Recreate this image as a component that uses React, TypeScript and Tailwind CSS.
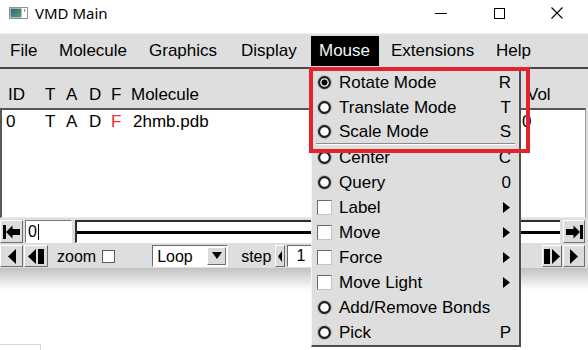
import React from 'react';

const sans = "font-['Liberation_Sans',Arial,sans-serif]";

type MenuItem = {
  label: string;
  kind: 'radio' | 'check';
  on?: boolean;
  accel?: string;
  sub?: boolean;
  sep?: boolean;
};

const topMenus = [
  { label: 'File', cls: 'w-[49px]' },
  { label: 'Molecule', cls: 'w-[90px]' },
  { label: 'Graphics', cls: 'w-[92px]' },
  { label: 'Display', cls: 'w-[78px]' },
  { label: 'Mouse', cls: 'w-[68px] mr-[4px] bg-black text-[#f4f4f4]' },
  { label: 'Extensions', cls: 'w-[105px]' },
  { label: 'Help', cls: 'w-[60px]' },
];

const mouseItems: MenuItem[] = [
  { label: 'Rotate Mode', kind: 'radio', on: true, accel: 'R' },
  { label: 'Translate Mode', kind: 'radio', accel: 'T' },
  { label: 'Scale Mode', kind: 'radio', accel: 'S', sep: true },
  { label: 'Center', kind: 'radio', accel: 'C' },
  { label: 'Query', kind: 'radio', accel: '0' },
  { label: 'Label', kind: 'check', sub: true },
  { label: 'Move', kind: 'check', sub: true },
  { label: 'Force', kind: 'check', sub: true },
  { label: 'Move Light', kind: 'check', sub: true },
  { label: 'Add/Remove Bonds', kind: 'radio' },
  { label: 'Pick', kind: 'radio', accel: 'P' },
];

function Radio({ on }: { on?: boolean }) {
  return (
    <svg width="15" height="15" viewBox="0 0 15 15">
      <circle cx="7.5" cy="7.5" r="7.3" fill="#b0b0b0" />
      <circle cx="7.5" cy="7.5" r="6.4" fill="#1e1e1e" />
      <circle cx="7.5" cy="7.5" r="4.3" fill="#ffffff" />
      {on && <circle cx="7.5" cy="7.5" r="3" fill="#000000" />}
    </svg>
  );
}

function Check() {
  return <div className="h-[15px] w-[15px] border border-t-[#6a6a6a] border-l-[#6a6a6a] border-r-[#c4c4c4] border-b-[#c4c4c4] bg-white" />;
}

function Raised({ className, children }: { className?: string; children?: React.ReactNode }) {
  return (
    <div className={`flex items-center justify-center border border-t-white border-l-white border-r-[#6d6d6d] border-b-[#6d6d6d] bg-[#dcdcdc] ${className ?? ''}`}>
      {children}
    </div>
  );
}

function Tri({ dir, w = 8, h = 15 }: { dir: 'l' | 'r'; w?: number; h?: number }) {
  const pts = dir === 'l' ? `${w},0 0,${h / 2} ${w},${h}` : `0,0 ${w},${h / 2} 0,${h}`;
  return (
    <svg width={w} height={h} viewBox={`0 0 ${w} ${h}`}>
      <polygon points={pts} fill="#000" />
    </svg>
  );
}

function Bar({ w = 6, h = 15 }: { w?: number; h?: number }) {
  return <div className="bg-black" style={{ width: w, height: h }} />;
}

function SkipIcon({ flip }: { flip?: boolean }) {
  return (
    <svg width="17" height="14" viewBox="0 0 17 14" className={flip ? 'scale-x-[-1]' : ''}>
      <rect x="0" y="0" width="3" height="14" fill="#000" />
      <polygon points="3,7 9.5,0.5 9.5,13.5" fill="#000" />
      <rect x="9" y="4" width="8" height="6" fill="#000" />
    </svg>
  );
}

function TitleBar() {
  return (
    <div className="flex h-[33px] items-start bg-white">
      <div className="flex h-[26px] w-full items-center">
        <svg width="19" height="12" viewBox="0 0 19 12" className="ml-[9px]">
          <defs>
            <linearGradient id="vmdg" x1="0" y1="0" x2="1" y2="1">
              <stop offset="0" stopColor="#2d5f86" />
              <stop offset="1" stopColor="#5ca56c" />
            </linearGradient>
          </defs>
          <rect x="0.5" y="0.5" width="18" height="11" fill="#fff" stroke="#8f8f8f" />
          <rect x="1.5" y="1.5" width="11" height="9" fill="url(#vmdg)" />
          <rect x="15" y="2" width="1" height="3" fill="#8f8f8f" />
        </svg>
        <span className="ml-[7px] font-['Noto_Sans','Open_Sans',sans-serif] text-[15px] text-black">VMD Main</span>
        <div className="ml-auto mr-[2px] flex items-center">
          <div className="flex h-[26px] w-[58px] items-center justify-center">
            <div className="h-px w-[12px] bg-black" />
          </div>
          <div className="flex h-[26px] w-[58px] items-center justify-center">
            <div className="h-[11px] w-[11px] border border-black" />
          </div>
          <div className="flex h-[26px] w-[58px] items-center justify-center">
            <svg width="12" height="12" viewBox="0 0 12 12">
              <path d="M0.5 0.5 L11.5 11.5 M11.5 0.5 L0.5 11.5" stroke="#000" strokeWidth="1.1" />
            </svg>
          </div>
        </div>
      </div>
    </div>
  );
}

function MenuBar() {
  return (
    <div className="flex h-[36px] items-center border-t border-t-[#f2f2f2] border-b-2 border-b-[#474747] bg-[#dedede] pl-[2px] text-[17px] text-black">
      {topMenus.map((m) => (
        <div key={m.label} className={`h-[30px] pl-[8px] leading-[30px] ${m.cls}`}>
          {m.label}
        </div>
      ))}
    </div>
  );
}

function MoleculeList() {
  return (
    <div className="flex flex-col bg-[#dedede]">
      <div className="flex h-[39px] items-end pb-[4px] pl-[8px] text-[17px] leading-[19px] text-black">
        <span className="w-[37px]">ID</span>
        <span className="w-[21px]">T</span>
        <span className="w-[23px]">A</span>
        <span className="w-[22px]">D</span>
        <span className="w-[20px]">F</span>
        <span className="flex-1">Molecule</span>
        <span className="w-[61px]">Vol</span>
      </div>
      <div className="mr-[2px] h-[110px] border-t-2 border-l-2 border-r border-b border-t-[#575757] border-l-[#575757] border-r-[#9a9a9a] border-b-[#ececec] bg-white">
        <div className="flex pt-[2px] pl-[4px] text-[17px] leading-[19px] text-black">
          <span className="w-[39px]">0</span>
          <span className="w-[21px]">T</span>
          <span className="w-[23px]">A</span>
          <span className="w-[22px]">D</span>
          <span className="w-[22px] text-[#ff2a2a]">F</span>
          <span className="flex-1">2hmb.pdb</span>
          <span className="w-[63px]">0</span>
        </div>
      </div>
    </div>
  );
}

function Toolbar() {
  return (
    <div className="flex flex-col bg-[#dedede] pt-[2px] pb-[1px] text-[16px] text-black">
      <div className="flex h-[23px] items-stretch">
        <Raised className="w-[23px]">
          <SkipIcon />
        </Raised>
        <div className="ml-[2px] flex w-[47px] items-center border border-t-[#7a7a7a] border-l-[#7a7a7a] border-r-white border-b-white bg-white pl-[2px]">
          <span className="leading-[18px]">0</span>
          <div className="ml-[1px] h-[16px] w-px bg-black" />
        </div>
        <div className="ml-[3px] flex w-[485px] flex-col border-t-2 border-l-2 border-t-[#2e2e2e] border-l-[#2e2e2e] border-b border-b-white bg-white">
          <div className="mt-[9px] h-[3px] w-full bg-black" />
        </div>
        <Raised className="ml-[3px] w-[22px]">
          <SkipIcon flip />
        </Raised>
      </div>
      <div className="mt-[2px] flex h-[22px] items-center">
        <Raised className="h-full w-[23px]">
          <Tri dir="l" />
        </Raised>
        <Raised className="ml-[1px] h-full w-[24px] gap-[2px]">
          <Tri dir="l" />
          <Bar w={6} />
        </Raised>
        <span className="ml-[9px] pt-[2px]">zoom</span>
        <div className="ml-[6px] h-[13px] w-[13px] border border-[#5a5a5a] bg-white" />
        <div className="ml-[37px] flex h-[22px] w-[76px] items-stretch border border-t-[#6a6a6a] border-l-[#6a6a6a] border-r-white border-b-white bg-white">
          <span className="flex-1 pl-[4px] pt-[2px] leading-[18px]">Loop</span>
          <Raised className="m-[1px] w-[19px]">
            <svg width="10" height="8" viewBox="0 0 10 8">
              <polygon points="0,0 10,0 5,7" fill="#000" />
            </svg>
          </Raised>
        </div>
        <span className="ml-[13px] pt-[2px]">step</span>
        <Raised className="ml-[4px] h-full w-[10px]">
          <Tri dir="l" w={4} h={11} />
        </Raised>
        <div className="ml-[2px] flex h-full w-[70px] items-center border border-t-[#6a6a6a] border-l-[#6a6a6a] border-r-white border-b-white bg-white pl-[8px]">
          1
        </div>
        <Raised className="ml-auto h-full w-[20px] gap-[2px]">
          <Bar w={6} />
          <Tri dir="r" />
        </Raised>
        <Raised className="ml-[1px] mr-[3px] h-full w-[22px]">
          <Tri dir="r" />
        </Raised>
      </div>
    </div>
  );
}

function MouseMenu() {
  return (
    <div className="absolute top-[68px] left-[311px] w-[210px] border-l border-l-[#f4f4f4] border-r-2 border-r-[#4e4e4e] border-b-2 border-b-[#4e4e4e] bg-[#dedede] pt-[2px] text-[17px] leading-[25px] text-black">
      {mouseItems.map((it) => (
        <React.Fragment key={it.label}>
          <div className={`flex items-center pl-[5px] pr-[8px] ${it.sep ? 'h-[23px]' : 'h-[25px]'}`}>
            <div className="flex w-[15px] justify-center">{it.kind === 'radio' ? <Radio on={it.on} /> : <Check />}</div>
            <span className="ml-[7px] flex-1">{it.label}</span>
            {it.accel && <span>{it.accel}</span>}
            {it.sub && (
              <svg width="7" height="11" viewBox="0 0 7 11" className="mr-[1px]">
                <polygon points="0,0 7,5.5 0,11" fill="#000" />
              </svg>
            )}
          </div>
          {it.sep && <div className="mx-[4px] h-[2px] border-t border-t-[#8c8c8c] border-b border-b-white" />}
        </React.Fragment>
      ))}
    </div>
  );
}

export default function App() {
  return (
    <div className={`relative h-[350px] w-[588px] overflow-hidden bg-white ${sans}`}>
      <TitleBar />
      <MenuBar />
      <MoleculeList />
      <Toolbar />
      <div className="h-[22px] bg-gradient-to-b from-[#c2c2c2] to-white" />
      <div className="mt-[54px] h-[6px] w-[41px] border-t border-r border-[#d6d6d6]" />

      <MouseMenu />
      <div className="pointer-events-none absolute top-[67px] left-[309px] h-[86px] w-[221px] border-4 border-[#e3222a]" />
    </div>
  );
}
